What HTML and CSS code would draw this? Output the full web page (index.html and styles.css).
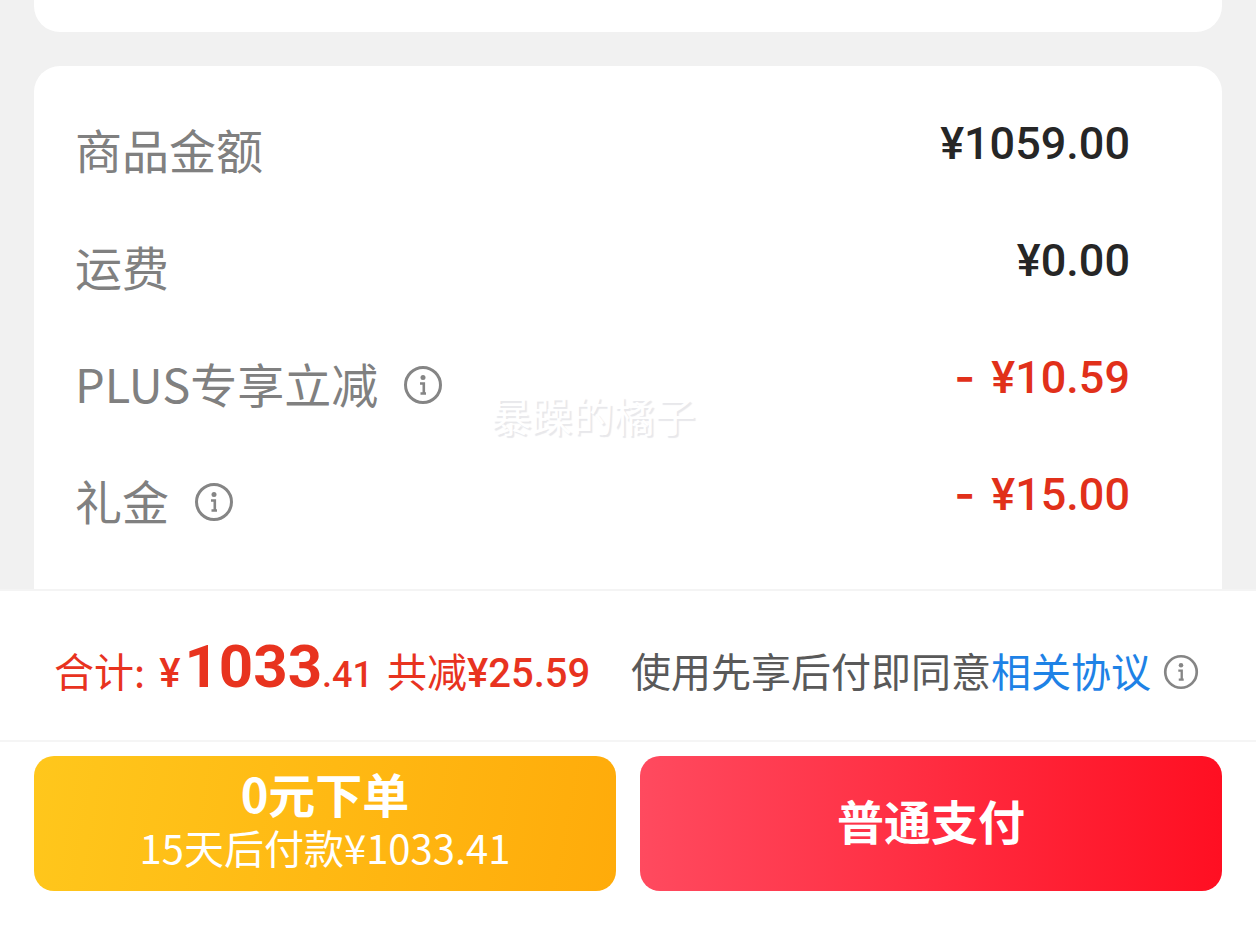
FILE: index.html
```
<!DOCTYPE html>
<html lang="zh-CN">
<head>
    <meta charset="UTF-8">
    <meta name="viewport" content="width=device-width, initial-scale=1">
    <title>确认订单</title>
    <link rel="stylesheet" href="styles.css">
</head>
<body>
    <svg class="sprite" aria-hidden="true">
        <symbol id="info" viewBox="0 0 40 40">
            <circle cx="20" cy="20" r="17.5" fill="none" stroke="currentColor" stroke-width="3"/>
            <circle cx="20" cy="12.5" r="2.5" fill="currentColor"/>
            <path d="M17 18.5H20.8V29M17.5 28.5H23" fill="none" stroke="currentColor" stroke-width="2.6"/>
        </symbol>
    </svg>

    <main class="content">
        <section class="card card-prev"></section>
        <section class="card card-price">
            <div class="row">
                <span class="label">商品金额</span>
                <span class="value">¥1059.00</span>
            </div>
            <div class="row">
                <span class="label">运费</span>
                <span class="value">¥0.00</span>
            </div>
            <div class="row">
                <span class="label">PLUS专享立减</span>
                <button class="info" aria-label="PLUS专享立减说明"><svg><use href="#info"/></svg></button>
                <span class="value minus"><span class="sign">-</span>¥10.59</span>
            </div>
            <div class="row">
                <span class="label">礼金</span>
                <button class="info" aria-label="礼金说明"><svg><use href="#info"/></svg></button>
                <span class="value minus"><span class="sign">-</span>¥15.00</span>
            </div>
            <div class="watermark">暴躁的橘子</div>
        </section>
    </main>

    <footer class="footer">
        <div class="summary">
            <div class="total">
                <span>合计:</span>
                <span class="amount"><span class="yen">¥</span><span class="big">1033</span><span class="cents">.41</span></span>
                <span>共减<span class="saved">¥25.59</span></span>
            </div>
            <div class="agreement">
                <span class="agreement-text">使用先享后付即同意<a href="#">相关协议</a></span>
                <button class="info info-small" aria-label="协议说明"><svg><use href="#info"/></svg></button>
            </div>
        </div>
        <div class="actions">
            <button class="btn btn-later">
                <span class="btn-title">0元下单</span>
                <span class="btn-sub">15天后付款¥1033.41</span>
            </button>
            <button class="btn btn-pay">
                <span class="btn-title">普通支付</span>
            </button>
        </div>
    </footer>
</body>
</html>
```
FILE: styles.css
```
* {
    box-sizing: border-box;
}
body {
    margin: 0;
    min-height: 100vh;
    display: flex;
    flex-direction: column;
    background-color: #fff;
    color: #262626;
    font-family: "Noto Sans CJK SC", sans-serif;
}
button {
    font-family: inherit;
    border: none;
    padding: 0;
    cursor: pointer;
}
.sprite {
    display: none;
}
.content {
    background-color: #f1f1f1;
    padding: 0 34px;
    display: flex;
    flex-direction: column;
    gap: 34px;
}
.card {
    background-color: #fff;
}
.card-prev {
    height: 32px;
    border-radius: 0 0 26px 26px;
}
.card-price {
    position: relative;
    border-radius: 26px 26px 0 0;
    padding: 26px 92px 29px 41px;
}
.row {
    display: flex;
    align-items: center;
    height: 117px;
}
.label {
    padding-bottom: 4px;
    font-size: 47px;
    line-height: 64px;
    color: #808080;
}
.info {
    display: flex;
    margin-left: 25px;
    background: none;
    color: #858585;
}
.info svg {
    width: 40px;
    height: 40px;
}
.value {
    margin-left: auto;
    padding-bottom: 14px;
    font-family: Roboto, sans-serif;
    font-size: 45px;
    font-weight: 500;
    line-height: 54px;
}
.minus {
    color: #e1301a;
}
.sign {
    font-family: Inter, sans-serif;
    font-weight: 600;
    margin-right: 16px;
}
.watermark {
    position: absolute;
    top: 318px;
    left: 0;
    right: 70px;
    text-align: center;
    font-size: 41px;
    line-height: 60px;
    color: #fff;
    text-shadow: 2px 2px 1px #e8e8eb;
    pointer-events: none;
}
.footer {
    border-top: 2px solid #f4f4f4;
}
.summary {
    display: flex;
    align-items: center;
    justify-content: space-between;
    height: 151px;
    padding: 12px 57px 0 54px;
    border-bottom: 2px solid #f5f5f5;
    font-size: 40px;
    white-space: nowrap;
}
.total {
    display: flex;
    align-items: baseline;
    gap: 14px;
    padding-bottom: 10px;
    color: #e8331f;
}
.amount,
.saved {
    font-family: Roboto, sans-serif;
    font-weight: 500;
}
.yen {
    margin-right: 4px;
}
.big {
    font-size: 60px;
    font-weight: 700;
}
.cents {
    font-size: 36px;
}
.agreement {
    display: flex;
    align-items: center;
    color: #595959;
}
.agreement-text {
    padding-bottom: 4px;
}
.agreement a {
    color: #1e82e6;
    text-decoration: none;
}
.info-small {
    margin-left: 12px;
}
.info-small svg {
    width: 36px;
    height: 36px;
}
.actions {
    display: flex;
    gap: 24px;
    padding: 14px 34px 41px;
}
.btn {
    flex: 1;
    display: flex;
    flex-direction: column;
    align-items: center;
    justify-content: center;
    height: 135px;
    padding-bottom: 8px;
    border-radius: 20px;
    color: #fff;
}
.btn-later {
    background: linear-gradient(100deg, #ffc71c, #ffab0a);
}
.btn-pay {
    background: linear-gradient(90deg, #ff4a5f, #ff0f22);
}
.btn-title {
    font-size: 47px;
    font-weight: 700;
    line-height: 54px;
}
.btn-sub {
    font-size: 40px;
    line-height: 54px;
}
```
